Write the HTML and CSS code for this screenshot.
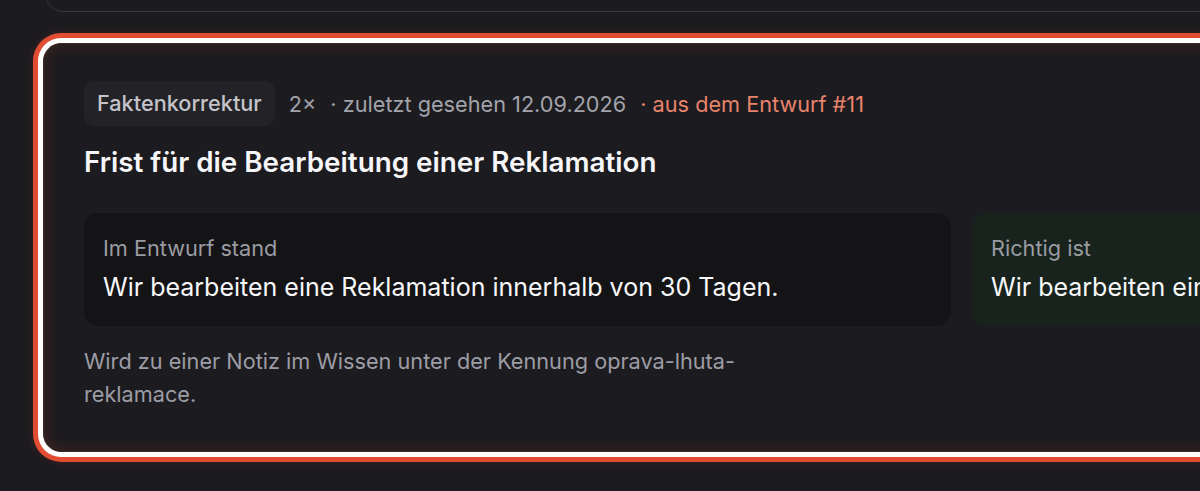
FILE: index.html
```html
<!DOCTYPE html>
<html lang="de">
<head>
<meta charset="utf-8">
<title>Faktenkorrektur</title>
<link rel="stylesheet" href="styles.css">
</head>
<body>
<div class="list">
  <div class="card card-prev"></div>
  <section class="card card-focus">
    <div class="meta">
      <span class="badge">Faktenkorrektur</span>
      <span class="count">2×</span>
      <span class="sep">· zuletzt gesehen 12.09.2026</span>
      <span class="source">· aus dem Entwurf #11</span>
    </div>
    <h2 class="title">Frist für die Bearbeitung einer Reklamation</h2>
    <div class="compare">
      <div class="box box-old">
        <div class="box-label">Im Entwurf stand</div>
        <div class="box-value">Wir bearbeiten eine Reklamation innerhalb von 30 Tagen.</div>
      </div>
      <div class="box box-new">
        <div class="box-label">Richtig ist</div>
        <div class="box-value">Wir bearbeiten eine Reklamation innerhalb von 15 Tagen.</div>
      </div>
    </div>
    <p class="note">Wird zu einer Notiz im Wissen unter der Kennung oprava-lhuta-reklamace.</p>
  </section>
</div>
</body>
</html>
```

FILE: styles.css
```css
html, body {
  margin: 0;
  padding: 0;
  background: #1c1b1f;
  overflow: hidden;
  width: 1200px;
  height: 491px;
}

body {
  font-family: "Inter", "Liberation Sans", sans-serif;
  color: #f2f2f4;
}

.list {
  display: flex;
  flex-direction: column;
  gap: 31px;
  width: 1860px;
}

.card {
  border-radius: 18px;
  box-sizing: border-box;
}

.card-prev {
  height: 60px;
  margin-top: -48px;
  margin-left: 45px;
  border: 1px solid #3a393f;
}

.card-focus {
  margin-left: 43px;
  width: 1800px;
  padding: 37px 40px 40px 40px;
  border: 1px solid #3b2b29;
  background: #1c1b1f;
  box-shadow:
    inset 0 0 16px rgba(225, 80, 50, 0.2),
    0 0 0 5px #ffffff,
    0 0 0 10px #e04d32,
    0 0 10px 10px rgba(224, 77, 50, 0.15);
}

.meta {
  display: flex;
  align-items: center;
  font-size: 21.7px;
  color: #a3a3ab;
}

.badge {
  background: #232226;
  color: #c4c4ca;
  font-weight: 500;
  padding: 10px 13px;
  border-radius: 10px;
  line-height: 25px;
}

.count {
  margin-left: 14px;
}

.sep {
  margin-left: 14px;
}

.source {
  margin-left: 14px;
  color: #e8846c;
}

.title {
  margin: 18px 0 0 0;
  font-size: 27.8px;
  line-height: 36px;
  font-weight: 600;
  color: #f6f6f8;
}

.compare {
  display: grid;
  grid-template-columns: 867px 867px;
  gap: 21px;
  margin-top: 33px;
}

.box {
  border-radius: 14px;
  padding: 22px 19px 24px 19px;
}

.box-old {
  background: #141416;
}

.box-new {
  background: #17231c;
}

.box-label {
  font-size: 21.7px;
  line-height: 26px;
  color: #9b9ba2;
}

.box-value {
  margin-top: 12px;
  font-size: 25px;
  line-height: 29px;
  color: #f8f8fa;
}

.note {
  margin: 19px 0 0 0;
  max-width: 700px;
  font-size: 21.7px;
  line-height: 33px;
  color: #9d9da5;
}
```
